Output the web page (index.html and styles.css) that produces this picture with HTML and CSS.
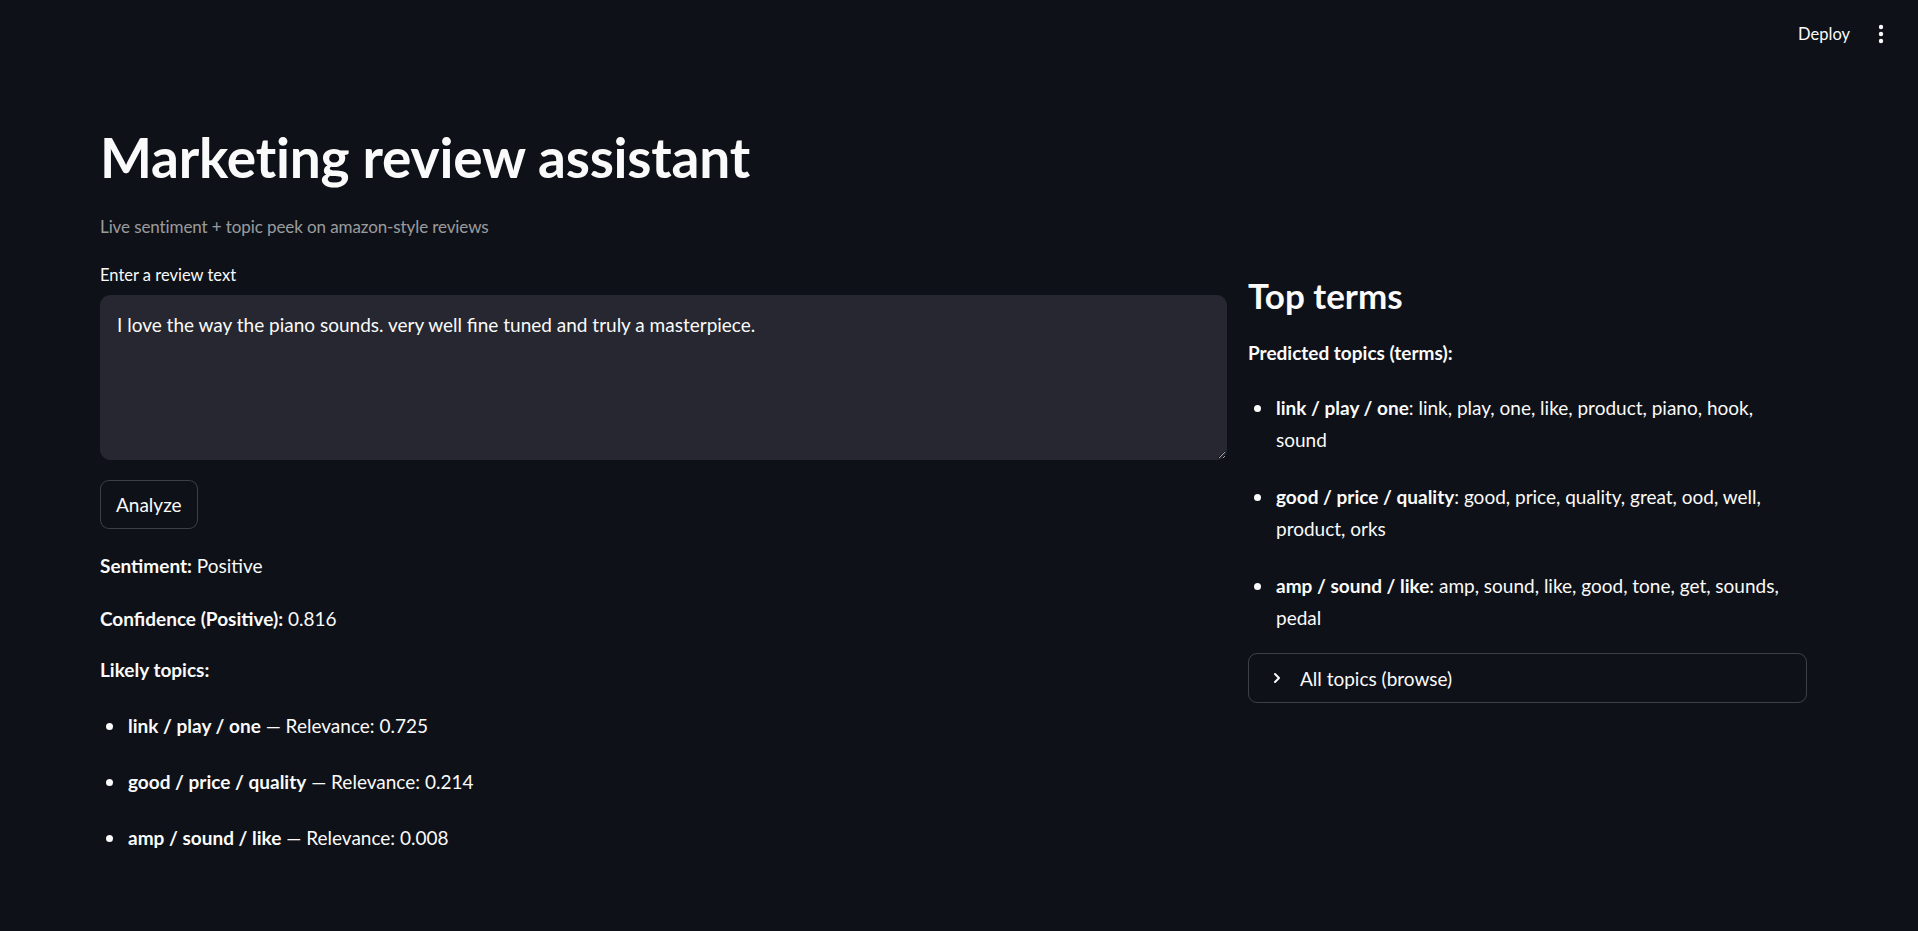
FILE: index.html
```html
<!DOCTYPE html>
<html lang="en">
<head>
<meta charset="utf-8">
<title>Marketing review assistant</title>
<link rel="stylesheet" href="styles.css">
</head>
<body>
<header class="topbar">
  <span class="deploy">Deploy</span>
  <span class="kebab" aria-label="menu">
    <svg width="6" height="20" viewBox="0 0 6 20"><circle cx="3" cy="3" r="2.2" fill="#fafafa"/><circle cx="3" cy="10" r="2.2" fill="#fafafa"/><circle cx="3" cy="17" r="2.2" fill="#fafafa"/></svg>
  </span>
</header>
<main class="main">
  <h1 class="title">Marketing review assistant</h1>
  <p class="caption">Live sentiment + topic peek on amazon-style reviews</p>
  <div class="columns">
    <section class="col-left">
      <label class="field-label" for="review">Enter a review text</label>
      <textarea id="review" class="review">I love the way the piano sounds. very well fine tuned and truly a masterpiece.</textarea>
      <button class="btn">Analyze</button>
      <p class="line"><strong>Sentiment:</strong> Positive</p>
      <p class="line"><strong>Confidence (Positive):</strong> 0.816</p>
      <p class="line likely"><strong>Likely topics:</strong></p>
      <ul class="list">
        <li><strong>link / play / one</strong> — Relevance: 0.725</li>
        <li><strong>good / price / quality</strong> — Relevance: 0.214</li>
        <li><strong>amp / sound / like</strong> — Relevance: 0.008</li>
      </ul>
    </section>
    <section class="col-right">
      <h3 class="subhead">Top terms</h3>
      <p class="line"><strong>Predicted topics (terms):</strong></p>
      <ul class="list terms">
        <li><strong>link / play / one</strong>: link, play, one, like, product, piano, hook, sound</li>
        <li><strong>good / price / quality</strong>: good, price, quality, great, ood, well, product, orks</li>
        <li><strong>amp / sound / like</strong>: amp, sound, like, good, tone, get, sounds, pedal</li>
      </ul>
      <div class="expander">
        <svg class="chev" width="12" height="12" viewBox="0 0 12 12"><path d="M4 2 L8 6 L4 10" fill="none" stroke="#fafafa" stroke-width="2" stroke-linecap="round" stroke-linejoin="round"/></svg>
        <span>All topics (browse)</span>
      </div>
    </section>
  </div>
</main>
</body>
</html>
```
FILE: styles.css
```css
* { box-sizing: border-box; }
html, body {
  margin: 0;
  padding: 0;
  background: #0e1117;
  color: #fafafa;
  font-family: Lato, "Noto Sans", sans-serif;
}
body { height: 931px; overflow: hidden; }

.topbar {
  height: 68px;
  display: flex;
  align-items: center;
  justify-content: flex-end;
  gap: 28px;
  padding-right: 34px;
}
.deploy { font-size: 16.5px; }
.kebab { display: flex; align-items: center; }

.main {
  padding: 0 111px 0 100px;
}
.title {
  margin: 57px 0 0;
  font-size: 55px;
  font-weight: 700;
  line-height: 64px;
  letter-spacing: -0.2px;
}
.caption {
  margin: 26px 0 0;
  font-size: 17px;
  line-height: 24px;
  color: rgba(250, 250, 250, 0.6);
  letter-spacing: -0.1px;
}
.columns {
  display: grid;
  grid-template-columns: 1127px 1fr;
  gap: 21px;
  margin-top: 24px;
}
.col-left { display: flex; flex-direction: column; align-items: flex-start; }
.field-label {
  font-size: 16.5px;
  line-height: 24px;
  margin-bottom: 8px;
}
.review {
  width: 100%;
  height: 165px;
  background: #262730;
  color: #fafafa;
  border: 1px solid #262730;
  border-radius: 10px;
  padding: 15px 16px;
  font-family: inherit;
  font-size: 19px;
  line-height: 28px;
  resize: vertical;
  color-scheme: dark;
  outline: none;
}
.btn {
  margin-top: 20px;
  height: 49px;
  padding: 0 15px;
  background: #0e1117;
  color: #fafafa;
  border: 1px solid rgba(250, 250, 250, 0.2);
  border-radius: 9px;
  font-family: inherit;
  font-size: 19px;
}
.line {
  margin: 0;
  font-size: 19px;
  line-height: 32px;
}
.col-left .line { margin-top: 21px; }
.col-left .line.likely { margin-top: 19px; }
.line strong, .list strong { font-weight: 700; }

.list {
  margin: 24px 0 0;
  padding: 0;
  list-style: none;
  font-size: 19px;
  line-height: 32px;
}
.list li {
  margin: 0 0 24px;
  padding-left: 28px;
  position: relative;
}
.list li::before {
  content: "";
  position: absolute;
  left: 6px;
  top: 13px;
  width: 7px;
  height: 7px;
  border-radius: 50%;
  background: #fafafa;
}

.col-right { padding-top: 10px; }
.subhead {
  margin: 0;
  font-size: 35px;
  font-weight: 700;
  line-height: 44px;
}
.col-right .line { margin-top: 20px; }
.terms { margin-top: 23px; }
.terms li { margin-bottom: 25px; }
.terms li:last-child { margin-bottom: 0; }

.expander {
  margin-top: 19px;
  height: 50px;
  border: 1px solid rgba(250, 250, 250, 0.2);
  border-radius: 9px;
  display: flex;
  align-items: center;
  gap: 17px;
  padding-left: 22px;
  font-size: 19px;
}
.chev { flex: none; }
```
